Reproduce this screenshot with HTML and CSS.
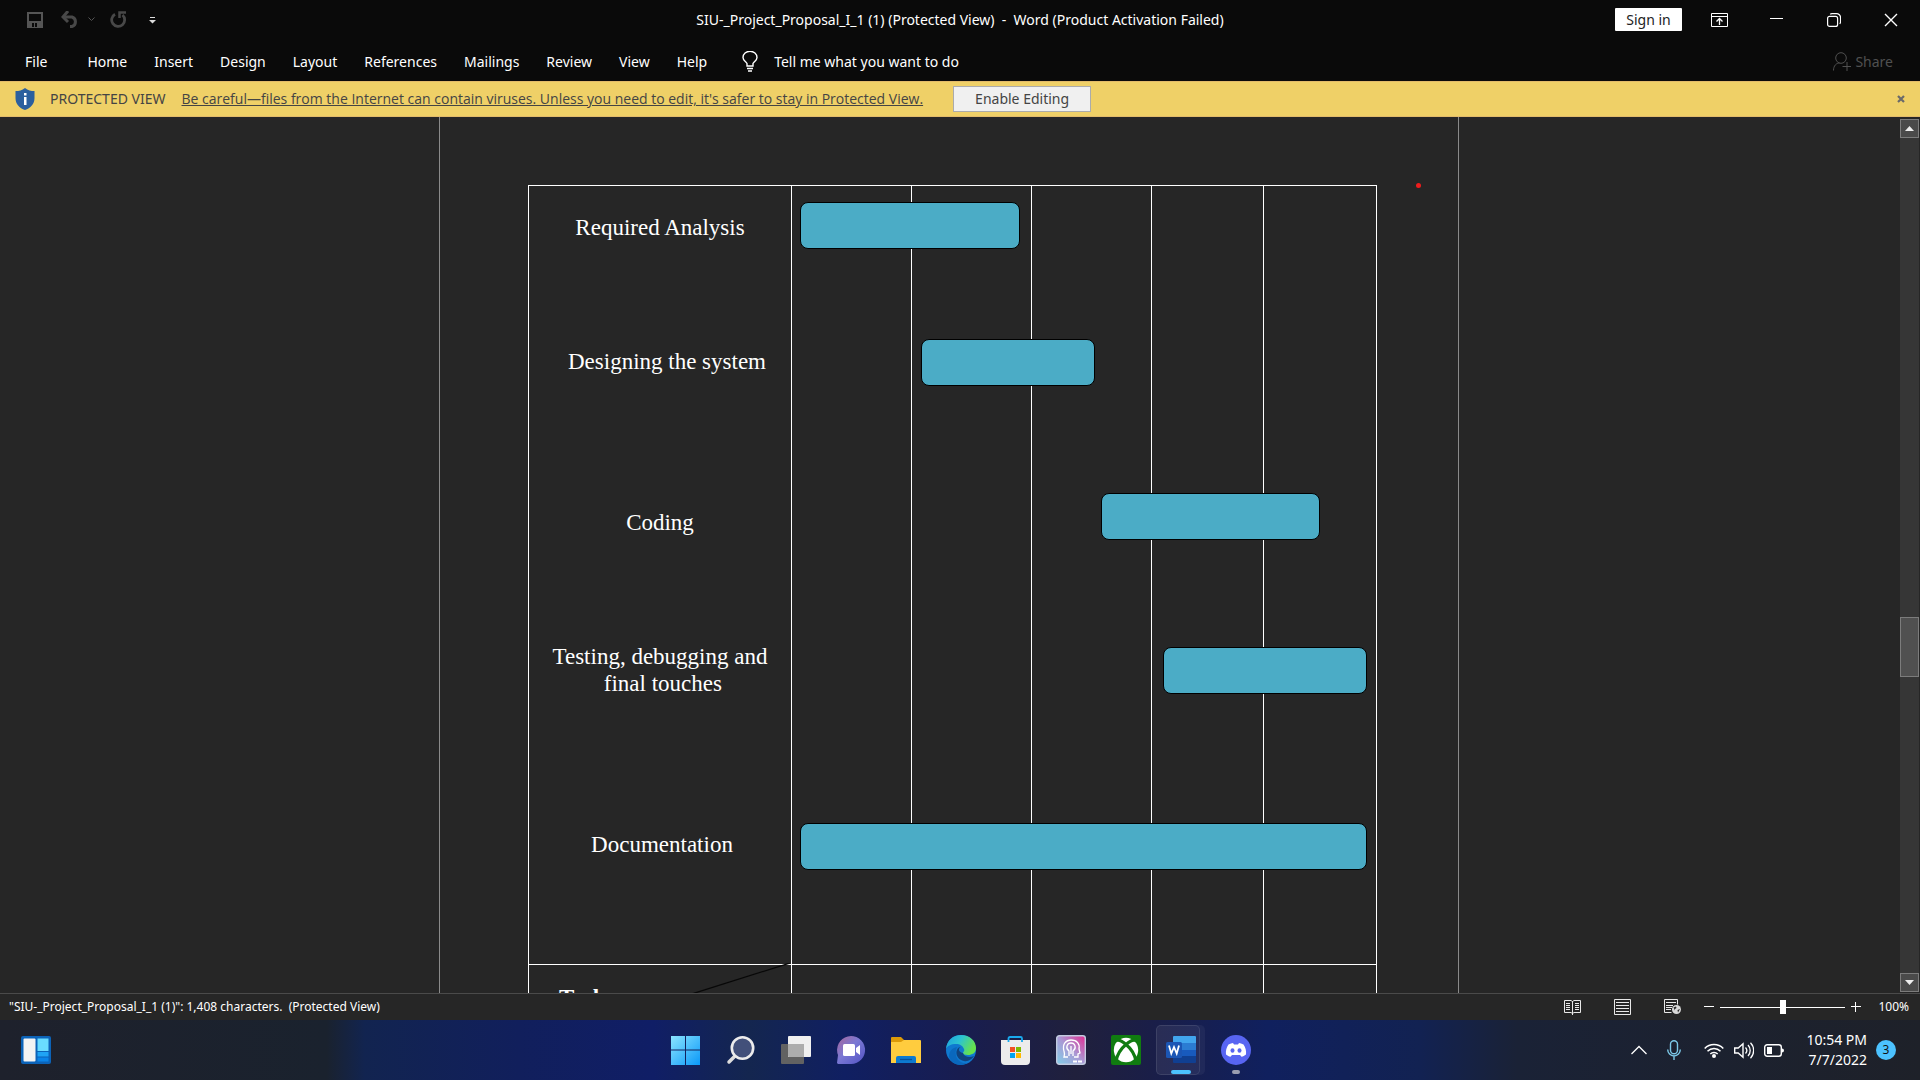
FILE: index.html
```html
<!DOCTYPE html>
<html lang="en">
<head>
<meta charset="utf-8">
<title>SIU-_Project_Proposal_I_1 (1) (Protected View) - Word</title>
<link rel="stylesheet" href="styles.css">
</head>
<body>
<header class="ribbon">
  <div class="titlebar">
    <div class="quick">
      <button class="icon-btn save" aria-label="Save"><svg width="16" height="16" viewBox="0 0 16 16"><path d="M1 1h14v14H1z" fill="none" stroke="#555" stroke-width="2"/><path d="M1 9h14v6H1z" fill="#555"/><path d="M5 11h2v4H5zM8 11h2v4H8z" fill="#0a0a0a"/></svg></button>
      <button class="icon-btn undo" aria-label="Undo"><svg width="19" height="17" viewBox="0 0 19 17"><path d="M2 6h9a5 5 0 0 1 0 9.500H9" fill="none" stroke="#484848" stroke-width="3"/><path d="M7 0 2 6l5 5" fill="none" stroke="#484848" stroke-width="3"/></svg></button>
      <button class="icon-btn more" aria-label="Undo options"><svg width="7" height="5" viewBox="0 0 7 5"><path d="M.5.5l3 3 3-3" fill="none" stroke="#555"/></svg></button>
      <button class="icon-btn redo" aria-label="Repeat"><svg width="17" height="17" viewBox="0 0 17 17"><path d="M5 3.200A6.500 6.500 0 1 0 12.500 4" fill="none" stroke="#484848" stroke-width="2.800"/><path d="M9.500 7V1.500H16" fill="none" stroke="#484848" stroke-width="2.500"/></svg></button>
      <button class="icon-btn custom" aria-label="Customize toolbar"><svg width="7" height="8" viewBox="0 0 7 8"><path d="M0 4h7L3.500 7.500z" fill="#ddd"/><path d="M1 1.500h5" stroke="#ddd"/></svg></button>
    </div>
    <div class="doc-title">SIU-_Project_Proposal_I_1 (1) (Protected View)&nbsp; -&nbsp; Word (Product Activation Failed)</div>
    <div class="window-tools">
      <button class="sign-in">Sign in</button>
      <button class="win-btn" aria-label="Ribbon display options"><svg width="17" height="14" viewBox="0 0 17 14"><path d="M.5.5h16v13H.5zM0 3.500h17" fill="none" stroke="#fff"/><path d="M8.500 12V6M5.500 8.500l3-3 3 3" fill="none" stroke="#fff" stroke-width="1.300"/></svg></button>
      <button class="win-btn" aria-label="Minimize"><svg width="13" height="13" viewBox="0 0 13 13"><path d="M0 5.500h13" stroke="#fff"/></svg></button>
      <button class="win-btn" aria-label="Restore"><svg width="14" height="14" viewBox="0 0 14 14"><rect x=".6" y="3.400" width="10" height="10" rx="2" fill="none" stroke="#fff" stroke-width="1.200"/><path d="M3.200 1.200Q4 .6 5 .6h4.500a4 4 0 0 1 4 4V9q0 1-.8 1.800" fill="none" stroke="#fff" stroke-width="1.200"/></svg></button>
      <button class="win-btn" aria-label="Close"><svg width="14" height="14" viewBox="0 0 14 14"><path d="M1 1l12 12M13 1 1 13" stroke="#fff" stroke-width="1.400"/></svg></button>
    </div>
  </div>
  <nav class="tabs">
    <a class="file" href="#">File</a><a href="#">Home</a><a href="#">Insert</a><a href="#">Design</a><a href="#">Layout</a><a href="#">References</a><a href="#">Mailings</a><a href="#">Review</a><a href="#">View</a><a href="#">Help</a>
    <a class="tell" href="#"><svg width="16" height="21" viewBox="0 0 16 21"><path d="M5 15v-2.500C4 10.500 1 9.500 1 6.500a6.500 5.800 0 0 1 14 0c0 3-3 4-4 6V15zM5 17.500h6M6 20h4" fill="none" stroke="#fff" stroke-width="1.400"/></svg>Tell me what you want to do</a>
    <button class="share" disabled><svg width="18" height="19" viewBox="0 0 18 19"><circle cx="8" cy="6" r="5.300" fill="none" stroke="#505050"/><path d="M.5 18.500c0-5 3-7.500 6-7.500M14 10v9M9.500 14.500H18" fill="none" stroke="#505050"/></svg>Share</button>
  </nav>
</header>
<section class="notice">
  <svg class="shield" width="20" height="22" viewBox="0 0 20 22"><path d="M10 0c3 2.500 6 3 9.500 3v7c0 6-4 10-9.500 12C4.500 20 .5 16 .5 10V3C4 3 7 2.500 10 0z" fill="#2b5f9e"/><path d="M9 9h2.500v8H9zM9 5h2.500v2.500H9z" fill="#fff"/></svg>
  <span class="notice-name">PROTECTED VIEW</span>
  <a class="notice-text" href="#">Be careful—files from the Internet can contain viruses. Unless you need to edit, it's safer to stay in Protected View.</a>
  <button class="enable">Enable Editing</button>
  <button class="icon-btn dismiss" aria-label="Dismiss"><svg width="8" height="8" viewBox="0 0 8 8"><path d="M1 1l6 6M7 1 1 7" stroke="#6a6a6a" stroke-width="2.200"/></svg></button>
</section>
<main class="workspace">
  <div class="canvas">
    <article class="page">
      <div class="chart">
        <table class="gantt">
          <colgroup><col class="c-task"><col class="c-wide"><col class="c-wide"><col class="c-wide"><col class="c-slim"><col></colgroup>
          <tbody>
          <tr class="plan">
            <td class="labels">
              <p class="t1">Required Analysis</p>
              <p class="t2">Designing the system</p>
              <p class="t3">Coding</p>
              <p class="t4">Testing, debugging and<br>&nbsp;final touches</p>
              <p class="t5">Documentation</p>
            </td><td></td><td></td><td></td><td></td><td></td>
          </tr>
          <tr class="foot">
            <th scope="row">Task</th><td></td><td></td><td></td><td></td><td></td>
          </tr>
          </tbody>
        </table>
        <i class="bar" style="left:272px;top:17px;width:220px"></i>
        <i class="bar" style="left:393px;top:154px;width:174px"></i>
        <i class="bar" style="left:573px;top:308px;width:219px"></i>
        <i class="bar" style="left:635px;top:462px;width:204px"></i>
        <i class="bar" style="left:272px;top:638px;width:567px"></i>
        <svg class="slash" width="262" height="80" viewBox="0 0 262 80"><path d="M262 0 8 80" stroke="#080808" stroke-width="1.300"/></svg>
      </div>
      <span class="mark"></span>
    </article>
  </div>
  <div class="scrollbar">
    <button class="scroll-btn" aria-label="Scroll up"><svg width="9" height="5" viewBox="0 0 9 5"><path d="M4.500 0 9 5H0z" fill="#eee"/></svg></button>
    <div class="track"><div class="thumb"></div></div>
    <button class="scroll-btn" aria-label="Scroll down"><svg width="9" height="5" viewBox="0 0 9 5"><path d="M0 0h9L4.500 5z" fill="#eee"/></svg></button>
  </div>
</main>
<footer class="status">
  <span class="status-text">"SIU-_Project_Proposal_I_1 (1)": 1,408 characters.&nbsp; (Protected View)</span>
  <button class="icon-btn view" aria-label="Read mode"><svg width="17" height="15" viewBox="0 0 17 15"><path d="M.5.500H7l1.500 1L10 .5h6.500v12H10l-1.500 1-1.500-1H.5zM8.500 1v14M2 3.500h4M2 5.500h4M2 7.500h4M2 9.500h4M11 3.500h4M11 5.500h4M11 7.500h4M11 9.500h4" fill="none" stroke="#e8e8e8"/></svg></button>
  <button class="icon-btn view" aria-label="Print layout"><svg width="17" height="16" viewBox="0 0 17 16"><path d="M.5.500h16v15H.5zM2 3.500h13M2 6.500h13M2 9.500h13M2 12.500h13" fill="none" stroke="#e8e8e8"/></svg></button>
  <button class="icon-btn view" aria-label="Web layout"><svg width="17" height="16" viewBox="0 0 17 16"><path d="M7.500 13.500h-7V.5h13v5M2 3.500h10M2 6.500h7M2 8.500h6M2 10.500h5" fill="none" stroke="#e8e8e8"/><circle cx="12.500" cy="10.500" r="4.500" fill="#d8d8d8"/><path d="M9.500 8.500l2.500-1 .5 1.500-1.500 1v1.500zM13.500 11l2.500-1-2 3.500z" fill="#262626"/></svg></button>
  <button class="icon-btn minus" aria-label="Zoom out"><svg width="10" height="10" viewBox="0 0 10 10"><path d="M0 4.500h10" stroke="#fff"/></svg></button>
  <input class="zoom" type="range" min="0" max="100" value="50" aria-label="Zoom">
  <button class="icon-btn plus" aria-label="Zoom in"><svg width="10" height="10" viewBox="0 0 10 10"><path d="M0 4.500h10M4.500 0v10" stroke="#fff"/></svg></button>
  <span class="zoom-value">100%</span>
</footer>
<div class="taskbar">
  <button class="widgets" aria-label="Widgets"><svg width="30" height="28" viewBox="0 0 30 28"><rect width="30" height="28" rx="2" fill="#0c63b8"/><rect x="2.500" y="2.500" width="12" height="23" rx="1" fill="#f3f3f3"/><path d="M16.500 2.500h11V15h-11z" fill="#6adcff"/><path d="M16.500 16h11v4.500h-11z" fill="#1fa4f5"/><path d="M16.500 21.500h11v4h-11z" fill="#0a84e8"/></svg></button>
  <div class="apps">
    <button class="app" aria-label="Start"><svg width="30" height="30" viewBox="0 0 30 30"><defs><linearGradient id="win" x1="0" y1="0" x2="1" y2="1"><stop offset="0" stop-color="#8be4ff"/><stop offset="1" stop-color="#0a98f8"/></linearGradient></defs><path d="M0 1h14v13.500H0zM15 1h14v13.500H15zM0 15.500h14V30H0zM15 15.500h14V30H15z" fill="url(#win)"/></svg></button>
    <button class="app" aria-label="Search"><svg width="30" height="30" viewBox="0 0 30 30"><path d="M10 20 3 27" stroke="#ddd" stroke-width="3.500" stroke-linecap="round"/><circle cx="16.500" cy="13" r="10.700" fill="#42507a" stroke="#ececec" stroke-width="2.600"/></svg></button>
    <button class="app" aria-label="Task view"><svg width="30" height="30" viewBox="0 0 30 30"><rect y="9" width="23" height="20" rx="1" fill="#626262"/><rect x="7" y="1" width="23" height="21" rx="1" fill="#f0f0f0"/><path d="M7 9h16v13H8l-1-1z" fill="#adadad"/></svg></button>
    <button class="app" aria-label="Chat"><svg width="30" height="30" viewBox="0 0 30 30"><defs><linearGradient id="chat" x1="0" y1="0" x2="1" y2="1"><stop offset="0" stop-color="#a8679a"/><stop offset=".45" stop-color="#7a78d4"/><stop offset="1" stop-color="#5152c4"/></linearGradient></defs><path d="M1 28l1-8A14 14 0 1 1 15 29H2z" fill="url(#chat)"/><rect x="7" y="9" width="12" height="12" rx="1.500" fill="#fff"/><path d="M20 13l4-3v10l-4-3z" fill="#fff"/></svg></button>
    <button class="app" aria-label="File Explorer"><svg width="30" height="30" viewBox="0 0 30 30"><path d="M0 3q0-1 1-1h9l3 3v5H0z" fill="#dc9a08"/><path d="M0 7h10l3-2h16q1 0 1 1v22H0z" fill="#ffcc3e"/><path d="M5 28v-5q0-2 2-2h16q2 0 2 2v5z" fill="#0d7ad0"/><path d="M9 24.500h12" stroke="#07509a" stroke-width="1.300"/></svg></button>
    <button class="app" aria-label="Edge"><svg width="30" height="30" viewBox="0 0 30 30"><defs><linearGradient id="edge" x1="0" y1="0" x2="1" y2=".4"><stop offset="0" stop-color="#1c9de0"/><stop offset=".5" stop-color="#2cc3d0"/><stop offset="1" stop-color="#66e24d"/></linearGradient></defs><circle cx="15" cy="15" r="15" fill="#0f78cf"/><path d="M0 14C1 5 7 0 15 0c9 0 15 6 15 13 0 5-4 7-8 7-3 0-5-1-5-2s2-2 1-4c-1-3-4-5-8-5-5 0-9 2-10 5z" fill="url(#edge)"/><path d="M11 12c-4 8 1 17 10 16-6 4-15 2-18-6 0-6 3-9 8-10z" fill="#0a68bd"/><path d="M17 18c-5-1-5-5-2-6-6 0-7 12 3 14 4 1 8-2 10-5-4 2-10 1-11-3z" fill="#10447f"/></svg></button>
    <button class="app" aria-label="Microsoft Store"><svg width="30" height="30" viewBox="0 0 30 30"><path d="M7.500 8V3.500Q7.500 2 9 2h10.500Q21 2 21 3.500V8" fill="none" stroke="#19a9ee" stroke-width="1.800"/><path d="M0 5h29v21q0 4-4 4H4q-4 0-4-4z" fill="#ececec"/><path d="M7.500 5v2M21 5v2" stroke="#19a9ee" stroke-width="1.800"/><path d="M9 12h5v5H9z" fill="#f25022"/><path d="M15 12h5v5h-5z" fill="#7fba00"/><path d="M9 18h5v5H9z" fill="#00a4ef"/><path d="M15 18h5v5h-5z" fill="#ffb900"/></svg></button>
    <button class="app" aria-label="MSI Center"><svg width="30" height="30" viewBox="0 0 30 30"><defs><linearGradient id="msi" x1="0" y1="1" x2="1" y2="0"><stop offset="0" stop-color="#82d0e8"/><stop offset=".5" stop-color="#a99ad5"/><stop offset="1" stop-color="#e32a92"/></linearGradient></defs><rect x=".7" y=".7" width="28.600" height="28.600" rx="2.500" fill="url(#msi)" stroke="#c2cbe0" stroke-width="1.400"/><path d="M12 22H8q1-3 0-6C6 9 10 5 15 5c6 0 9 4 8 9l1 4-2 1v3h-4M13 21v-5c-4-3-2-8 2-8s6 5 2 8v5M15 11v8" fill="none" stroke="#fff" stroke-width="1.300"/><path d="M17 26.500h10" stroke="#fff" stroke-width="2" stroke-dasharray="4 1"/></svg></button>
    <button class="app" aria-label="Xbox"><svg width="30" height="30" viewBox="0 0 30 30"><rect width="30" height="30" rx="2" fill="#107c10"/><circle cx="15" cy="15" r="12.200" fill="#fff"/><path d="M4 6Q8 3 15 9.500 23 16 25 26M26 6Q22 3 15 9.500 7 16 5 26" fill="none" stroke="#107c10" stroke-width="3.200"/></svg></button>
    <button class="app active" aria-label="Word"><svg width="30" height="30" viewBox="0 0 30 30"><path d="M7 2q0-1 1-1h21q1 0 1 1v6H7z" fill="#41a5ee"/><path d="M7 8h23v7H7z" fill="#2b7cd3"/><path d="M7 15h23v6H7z" fill="#185abd"/><path d="M7 21h23v6q0 1-1 1H8q-1 0-1-1z" fill="#103f91"/><rect y="7" width="16" height="16" rx="1.500" fill="#1b56b5"/><path d="M3 10.500l2.300 8L8 12l2.700 6.500 2.300-8" fill="none" stroke="#fff" stroke-width="1.800"/></svg></button>
    <button class="app running" aria-label="Discord"><svg width="30" height="30" viewBox="0 0 30 30"><circle cx="15" cy="15" r="15" fill="#5865f2"/><path d="M10 8.500l2-.5 1 1.500h4L18 8l2 .5 2.500 1c2 3 3 6 2.500 10-1.500 1.300-3 2-4.500 2.300L19 20h-8l-1.500 1.800C8 21.500 6.500 20.800 5 19.500c-.5-4 .5-7 2.500-10z" fill="#fff"/><ellipse cx="11.500" cy="15.500" rx="2" ry="2.200" fill="#5865f2"/><ellipse cx="18.500" cy="15.500" rx="2" ry="2.200" fill="#5865f2"/></svg></button>
  </div>
  <div class="tray">
    <button class="icon-btn up" aria-label="Hidden icons"><svg width="16" height="10" viewBox="0 0 16 10"><path d="M.5 9 8 1.500 15.500 9" fill="none" stroke="#fff" stroke-width="1.300"/></svg></button>
    <button class="icon-btn mic" aria-label="Microphone"><svg width="14" height="20" viewBox="0 0 14 20"><rect x="3.500" y=".7" width="7" height="13" rx="3.500" fill="none" stroke="#7cc8e8" stroke-width="1.400"/><path d="M.7 9.500a6.300 6.500 0 0 0 12.600 0M7 16v4" fill="none" stroke="#7cc8e8" stroke-width="1.400"/></svg></button>
    <button class="icon-btn sys" aria-label="Network, volume and battery">
      <svg width="20" height="15" viewBox="0 0 20 15"><path d="M.7 5.500a13 13 0 0 1 18.600 0M3.500 8.300a9 9 0 0 1 13 0M6.300 11a5.200 5.200 0 0 1 7.400 0" fill="none" stroke="#fff" stroke-width="1.500"/><circle cx="10" cy="13" r="2" fill="#fff"/></svg>
      <svg width="20" height="17" viewBox="0 0 20 17"><path d="M.7 6v5h3.500L9 15.300V1.700L4.200 6z" fill="none" stroke="#fff" stroke-width="1.400"/><path d="M11.500 5.500a4.500 4.500 0 0 1 0 6M14 3a8 8 0 0 1 0 11M16.500.8a11 11 0 0 1 0 15.400" fill="none" stroke="#fff" stroke-width="1.300"/></svg>
      <svg width="20" height="13" viewBox="0 0 20 13"><rect x=".7" y=".7" width="16.600" height="11.600" rx="2.500" fill="none" stroke="#fff" stroke-width="1.400"/><rect x="3" y="3" width="5" height="7" fill="#fff"/><path d="M18 4.500q2 0 2 2t-2 2z" fill="#fff"/></svg>
    </button>
    <div class="clock"><time>10:54 PM</time><time>7/7/2022</time></div>
    <span class="badge">3</span>
  </div>
</div>
</body>
</html>
```
FILE: styles.css
```css
* { box-sizing: border-box; }
body {
  margin: 0;
  height: 100vh;
  display: flex;
  flex-direction: column;
  overflow: hidden;
  background: #262626;
  color: #fff;
  font: 14px/20px "Noto Sans", "Open Sans", sans-serif;
}
button { font: inherit; color: inherit; border: 0; padding: 0; background: none; }
a { color: inherit; text-decoration: none; }
svg { display: block; flex: none; }
.icon-btn { display: flex; align-items: center; flex: none; }

/* Title bar and tabs */
.ribbon { background: #0a0a0a; flex: none; }
.titlebar { height: 39px; display: grid; grid-template-columns: 1fr auto 1fr; align-items: center; }
.quick { display: flex; align-items: center; padding-left: 27px; }
.undo { margin-left: 18px; }
.more { margin-left: 8px; }
.redo { margin-left: 15px; }
.custom { margin-left: 22px; }
.doc-title { white-space: nowrap; }
.window-tools { display: flex; justify-content: flex-end; align-items: center; padding-right: 1px; }
.sign-in { width: 67px; height: 23px; background: #fff; color: #222; border-radius: 1px; margin-right: 9px; }
.win-btn { width: 57px; height: 38px; display: flex; align-items: center; justify-content: center; }
.tabs { height: 42px; display: flex; align-items: center; gap: 27px; padding: 3px 27px 0 25px; }
.file { margin-right: 13px; }
.tell { display: flex; align-items: center; gap: 16px; margin-left: 8px; }
.share { display: flex; align-items: center; gap: 4px; margin-left: auto; color: #505050; }

/* Protected view notice */
.notice {
  flex: none;
  height: 36px;
  display: flex;
  align-items: center;
  padding: 0 15px;
  background: #efd067;
  border: solid #e3bb6a;
  border-width: 1px 0;
  color: #444;
}
.notice-name { margin-left: 15px; }
.notice-text { margin-left: 16px; text-decoration: underline; font-family: "Open Sans", "Noto Sans", sans-serif; }
.enable { width: 138px; height: 26px; margin-left: 30px; background: #f0f0f0; border: 1px solid #ababab; }
.dismiss { margin-left: auto; }

/* Document */
.workspace { flex: 1; min-height: 0; display: flex; }
.canvas { flex: 1; display: flex; justify-content: center; overflow: hidden; padding-right: 2px; }
.page { position: relative; width: 1020px; height: 1200px; border: solid #8a8a8a; border-width: 0 1px; padding: 68px 81px 0 88px; }
.chart { position: relative; }
.gantt { width: 849px; table-layout: fixed; border-collapse: collapse; }
.gantt td, .gantt th { border: 1px solid #fff; padding: 0; vertical-align: top; }
.c-task { width: 263px; }
.c-wide { width: 120px; }
.c-slim { width: 112px; }
.labels, .gantt th { font: 23px/27px "Liberation Serif", "Times New Roman", serif; text-align: center; }
.gantt .foot th { font-weight: bold; text-align: left; padding: 19px 0 0 30px; }
.plan { height: 779px; }
.foot { height: 120px; }
.labels p { margin: 0; }
.labels .t1 { padding-top: 28px; }
.labels .t2 { padding: 107px 0 0 14px; }
.labels .t3 { padding-top: 134px; }
.labels .t4 { padding-top: 107px; }
.labels .t5 { padding: 134px 0 0 4px; }
.bar { position: absolute; height: 47px; background: #4bacc6; border: 1px solid #000; border-radius: 8px; }
.slash { position: absolute; left: 0; top: 778px; }
.mark { position: absolute; left: 976px; top: 66px; width: 5px; height: 5px; border-radius: 50%; background: #ee1c1c; }

/* Scroll bar */
.scrollbar { width: 20px; padding: 2px 1px 1px 0; display: flex; flex-direction: column; }
.scroll-btn { height: 19px; display: flex; align-items: center; justify-content: center; background: #4a4a4a; border: 1px solid #7c7c7c; }
.track { flex: 1; background: #363636; padding-top: 479px; }
.thumb { height: 60px; background: #505050; border: 1px solid #7c7c7c; }

/* Status bar */
.status { flex: none; height: 27px; display: flex; align-items: center; padding: 0 11px 0 9px; border-top: 1px solid #4a4a4a; font-size: 12px; }
.status-text { margin-right: auto; }
.view { margin-right: 33px; }
.minus { margin-left: -10px; }
.zoom { appearance: none; width: 125px; height: 14px; margin: 0 6px; background: linear-gradient(#fff, #fff) center / 100% 1px no-repeat; }
.zoom::-webkit-slider-thumb { appearance: none; width: 6px; height: 14px; background: #fff; }
.zoom-value { margin-left: 17px; }

/* Taskbar */
.taskbar {
  flex: none;
  height: 60px;
  display: grid;
  grid-template-columns: 1fr auto 1fr;
  align-items: center;
  padding-left: 1px;
  background: linear-gradient(90deg, #1e212c 0, #1a222e 17%, #122450 19%, #111f5c 27%, #101e66 34%, #14264f 39%, #101f62 44%, #181d50 50%, #20203c 56%, #1a1e48 60%, #10205e 66%, #122252 74%, #1a2236 79%, #1e2129 100%);
}
.widgets { justify-self: start; margin-left: 20px; }
.apps { display: flex; }
.app { position: relative; width: 55px; height: 50px; display: flex; align-items: center; justify-content: center; }
.active::before { content: ""; position: absolute; inset: 0 8px 0 3px; border: 1px solid #ffffff18; border-radius: 5px; background: #ffffff12; box-shadow: 5px 0 0 #ffffff0c; }
.active svg { position: relative; }
.active::after, .running::after { content: ""; position: absolute; bottom: 1px; width: 20px; height: 4px; border-radius: 2px; background: #4cc2ff; }
.running::after { width: 8px; background: #9a9db0; }
.tray { display: flex; justify-content: flex-end; align-items: center; padding-right: 24px; }
.mic { margin-left: 20px; }
.sys { margin-left: 23px; gap: 10px; }
.clock { display: flex; flex-direction: column; align-items: flex-end; margin-left: 22px; }
.badge { width: 20px; height: 20px; margin-left: 9px; border-radius: 50%; background: #4cc2ff; color: #111; font-size: 12px; text-align: center; }
```
